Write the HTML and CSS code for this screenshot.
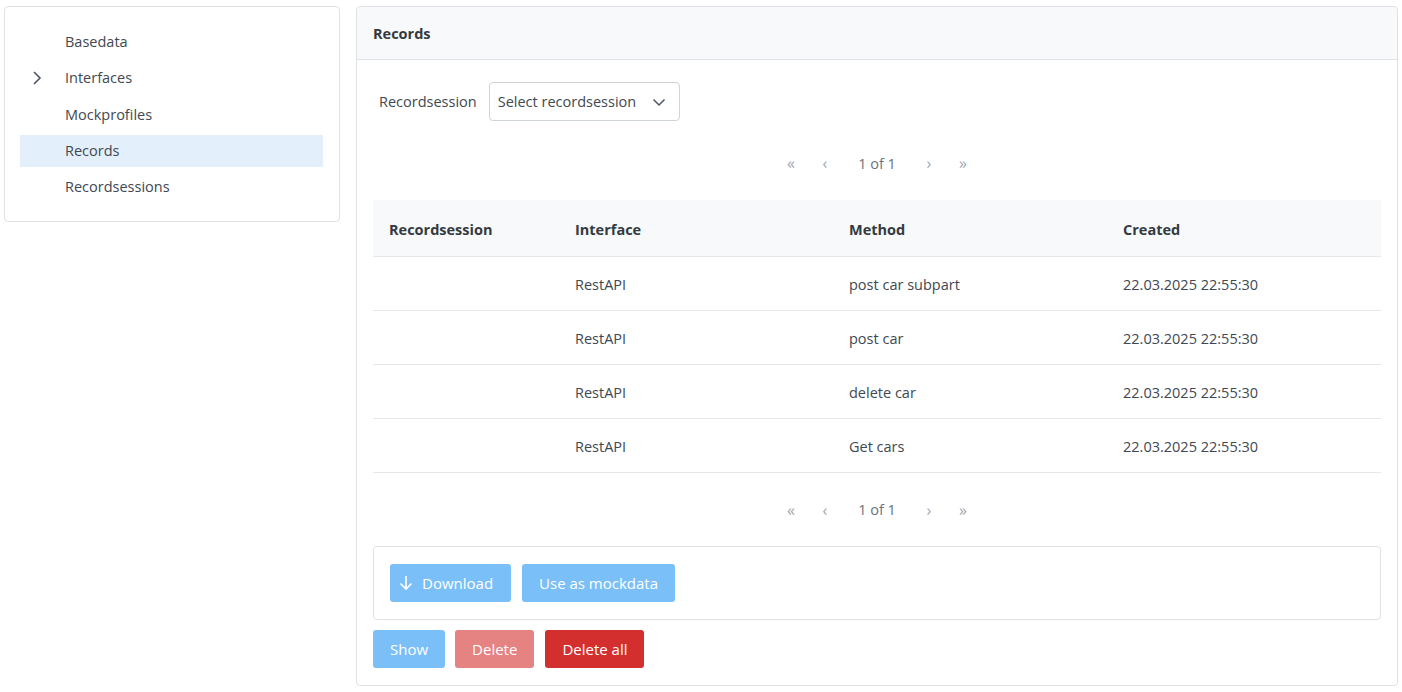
FILE: index.html
```html
<!DOCTYPE html>
<html>
<head>
<meta charset="utf-8">
<link rel="stylesheet" href="styles.css">
</head>
<body>
<div class="layout">
  <aside class="side card">
    <ul class="menu">
      <li class="item"><span class="chev"></span><span>Basedata</span></li>
      <li class="item"><span class="chev"><svg width="10" height="16" viewBox="0 0 10 16"><path d="M2 2l6 6-6 6" fill="none" stroke="#4b5563" stroke-width="1.6"/></svg></span><span>Interfaces</span></li>
      <li class="item"><span class="chev"></span><span>Mockprofiles</span></li>
      <li class="item active"><span class="chev"></span><span>Records</span></li>
      <li class="item"><span class="chev"></span><span>Recordsessions</span></li>
    </ul>
  </aside>
  <main class="main card">
    <div class="head">Records</div>
    <div class="body">
      <div class="filter">
        <label>Recordsession</label>
        <div class="select"><span>Select recordsession</span>
          <svg width="14" height="14" viewBox="0 0 14 14"><path d="M1.5 4.5l5.5 5.5 5.5-5.5" fill="none" stroke="#4b5563" stroke-width="1.5"/></svg>
        </div>
      </div>
      <div class="pager">
        <span class="pg">«</span><span class="pg">‹</span><span class="pcount">1 of 1</span><span class="pg">›</span><span class="pg">»</span>
      </div>
      <table class="tbl">
        <colgroup><col class="c1"><col><col><col></colgroup>
        <thead><tr><th>Recordsession</th><th>Interface</th><th>Method</th><th>Created</th></tr></thead>
        <tbody>
          <tr><td></td><td>RestAPI</td><td>post car subpart</td><td>22.03.2025 22:55:30</td></tr>
          <tr><td></td><td>RestAPI</td><td>post car</td><td>22.03.2025 22:55:30</td></tr>
          <tr><td></td><td>RestAPI</td><td>delete car</td><td>22.03.2025 22:55:30</td></tr>
          <tr><td></td><td>RestAPI</td><td>Get cars</td><td>22.03.2025 22:55:30</td></tr>
        </tbody>
      </table>
      <div class="pager pager2">
        <span class="pg">«</span><span class="pg">‹</span><span class="pcount">1 of 1</span><span class="pg">›</span><span class="pg">»</span>
      </div>
      <div class="actions">
        <button class="btn blue dl"><svg width="14" height="16" viewBox="0 0 14 16"><path d="M7 1v13M1.5 8.5L7 14l5.5-5.5" fill="none" stroke="#fff" stroke-width="1.6"/></svg>Download</button>
        <button class="btn blue">Use as mockdata</button>
      </div>
      <div class="row-btns">
        <button class="btn blue">Show</button>
        <button class="btn redlight">Delete</button>
        <button class="btn red">Delete all</button>
      </div>
    </div>
  </main>
</div>
</body>
</html>
```
FILE: styles.css
```css
* { box-sizing: border-box; }
body {
  margin: 0;
  font-family: "Open Sans", "Noto Sans", sans-serif;
  font-size: 14.5px;
  color: #414851;
  background: #fff;
}
.layout {
  display: flex;
  align-items: flex-start;
  gap: 16px;
  padding: 6px 4px 0 4px;
}
.card {
  border: 1px solid #dee2e6;
  border-radius: 4px;
  background: #fff;
}
.side {
  width: 336px;
  padding: 16px 16px 16px 15px;
}
.menu { list-style: none; margin: 0; padding: 0; }
.item {
  display: flex;
  align-items: center;
  height: 36.5px;
  padding-left: 10px;
}
.chev { width: 35px; display: flex; align-items: center; padding-left: 2px; }
.active { background: #e3f0fb; height: 32px; margin: 2px 0 2px 0; }
.main {
  width: 1042px;
  height: 680px;
}
.head {
  height: 53px;
  background: #f8f9fa;
  border-bottom: 1px solid #dee2e6;
  display: flex;
  align-items: center;
  padding-left: 16px;
  font-weight: 700;
  color: #343a40;
  font-size: 14.5px;
  border-radius: 4px 4px 0 0;
}
.body { padding: 22px 16px 0 16px; }
.filter { display: flex; align-items: center; gap: 12px; padding-left: 6px; }
.select {
  width: 191px;
  height: 39px;
  border: 1px solid #ced4da;
  border-radius: 4px;
  display: flex;
  align-items: center;
  justify-content: space-between;
  padding: 0 13px 0 8px;
}
.pager {
  display: flex;
  justify-content: center;
  align-items: center;
  height: 40px;
  margin-top: 22px;
  margin-bottom: 17px;
  color: #a0a6ae;
}
.pg { width: 34px; text-align: center; font-size: 16px; }
.pcount { width: 70px; text-align: center; color: #6b7280; }
.pager2 { margin-top: 17px; margin-bottom: 16px; }
.tbl {
  width: 100%;
  border-collapse: collapse;
  table-layout: fixed;
}
.c1 { width: 186px; }
.tbl th {
  background: #f8f9fa;
  text-align: left;
  font-weight: 700;
  color: #343a40;
  height: 56px;
  padding: 4px 16px 0;
  border-bottom: 1px solid #e5e7eb;
}
.tbl td {
  height: 54px;
  padding: 2px 16px 0;
  border-bottom: 1px solid #e5e7eb;
}
.actions {
  border: 1px solid #dee2e6;
  border-radius: 4px;
  height: 74px;
  display: flex;
  align-items: center;
  gap: 11px;
  padding: 0 16px;
}
.row-btns { display: flex; gap: 10px; margin-top: 10px; }
.btn {
  height: 38px;
  border: 0;
  border-radius: 3px;
  font-family: inherit;
  font-size: 15px;
  color: #fff;
  padding: 0 17px;
  display: flex;
  align-items: center;
  gap: 9px;
}
.btn.dl { padding-left: 9px; padding-right: 18px; }
.blue { background: #7bbff8; }
.redlight { background: #e58282; }
.red { background: #d32f2f; margin-left: 1px; }
```
